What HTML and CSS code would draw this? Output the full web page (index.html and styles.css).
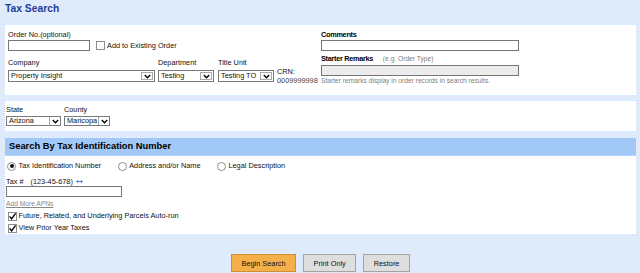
FILE: index.html
```html
<!DOCTYPE html>
<html lang="en">
<head>
    <meta charset="UTF-8">
    <title>Tax Search</title>
    <link rel="stylesheet" href="styles.css">
</head>
<body>
    <h1 class="title">Tax Search</h1>

    <div class="panel order-panel">
        <div class="col-left">
            <div class="lbl">Order No.(optional)</div>
            <div class="row">
                <input type="text" class="txt order-no">
                <span class="chk chk-add"></span>
                <span>Add to Existing Order</span>
            </div>
            <div class="row fields">
                <div class="field">
                    <div class="lbl">Company</div>
                    <div class="sel sel-company"><span class="val">Property Insight</span><span class="arr"><svg width="7" height="5" viewBox="0 0 7 5"><polyline points="0.8,1 3.5,3.8 6.2,1" fill="none" stroke="#000" stroke-width="1.4"/></svg></span></div>
                </div>
                <div class="field">
                    <div class="lbl">Department</div>
                    <div class="sel sel-dept"><span class="val">Testing</span><span class="arr"><svg width="7" height="5" viewBox="0 0 7 5"><polyline points="0.8,1 3.5,3.8 6.2,1" fill="none" stroke="#000" stroke-width="1.4"/></svg></span></div>
                </div>
                <div class="field">
                    <div class="lbl">Title Unit</div>
                    <div class="sel sel-unit"><span class="val">Testing TO</span><span class="arr"><svg width="7" height="5" viewBox="0 0 7 5"><polyline points="0.8,1 3.5,3.8 6.2,1" fill="none" stroke="#000" stroke-width="1.4"/></svg></span></div>
                </div>
                <div class="crn">CRN:<br><span class="crn-num">0009999998</span></div>
            </div>
        </div>
        <div class="col-right">
            <div class="lbl strong">Comments</div>
            <input type="text" class="txt comments">
            <div class="lbl strong remarks-lbl">Starter Remarks <span class="hint eg">(e.g. Order Type)</span></div>
            <input type="text" class="txt remarks" disabled>
            <div class="hint note">Starter remarks display in order records in search results.</div>
        </div>
    </div>

    <div class="panel place-panel">
        <div class="field">
            <div class="lbl">State</div>
            <div class="sel small sel-state"><span class="val">Arizona</span><span class="arr"><svg width="7" height="5" viewBox="0 0 7 5"><polyline points="0.8,1 3.5,3.8 6.2,1" fill="none" stroke="#000" stroke-width="1.4"/></svg></span></div>
        </div>
        <div class="field">
            <div class="lbl">County</div>
            <div class="sel small sel-county"><span class="val">Maricopa</span><span class="arr"><svg width="7" height="5" viewBox="0 0 7 5"><polyline points="0.8,1 3.5,3.8 6.2,1" fill="none" stroke="#000" stroke-width="1.4"/></svg></span></div>
        </div>
    </div>

    <div class="panel search-panel">
        <div class="bar">Search By Tax Identification Number</div>
        <div class="search-body">
            <div class="radios">
                <span class="opt"><span class="radio on"></span>Tax Identification Number</span>
                <span class="opt"><span class="radio"></span>Address and/or Name</span>
                <span class="opt"><span class="radio"></span>Legal Description</span>
            </div>
            <div class="lbl tax-lbl">Tax #<span class="fmt">(123-45-678)</span><svg class="swap" width="7" height="5" viewBox="0 0 7 5"><path d="M0.6 2.5H6.4M2.1 1L0.6 2.5L2.1 4M4.9 1L6.4 2.5L4.9 4" fill="none" stroke="#3b7ddd" stroke-width="0.9"/></svg></div>
            <input type="text" class="txt tax-no">
            <div class="more"><a href="#">Add More APNs</a></div>
            <div class="chk-row"><span class="chk on"><svg width="9" height="9" viewBox="0 0 9 9"><path d="M1.6 4.4L3.6 6.8L7.6 1.4" fill="none" stroke="#000" stroke-width="1.4"/></svg></span>Future, Related, and Underlying Parcels Auto-run</div>
            <div class="chk-row second"><span class="chk on"><svg width="9" height="9" viewBox="0 0 9 9"><path d="M1.6 4.4L3.6 6.8L7.6 1.4" fill="none" stroke="#000" stroke-width="1.4"/></svg></span>View Prior Year Taxes</div>
        </div>
    </div>

    <div class="actions">
        <button class="btn primary">Begin Search</button>
        <button class="btn">Print Only</button>
        <button class="btn">Restore</button>
    </div>
</body>
</html>
```

FILE: styles.css
```css
body {
    margin: 0;
    padding: 0 3px 0 4px;
    background: #dfeafb;
    font-family: "Liberation Sans", Arial, sans-serif;
    font-size: 7.33px;
    color: #111;
}
.title {
    margin: 0;
    padding: 2px 0 8px 1px;
    font-size: 10.3px;
    line-height: 14px;
    color: #1e3c96;
}
.panel {
    background: #fff;
    border: 1px dotted #c6d8f3;
}
.lbl {
    line-height: 9px;
    white-space: nowrap;
}
.strong {
    font-weight: bold;
    letter-spacing: -0.3px;
    color: #000;
}
.hint {
    font-size: 6.67px;
    color: #808080;
    font-weight: normal;
    letter-spacing: 0;
}
.row {
    display: flex;
    align-items: center;
}
.txt {
    box-sizing: border-box;
    height: 11px;
    margin: 0;
    padding: 0 2px;
    border: 1px solid #767676;
    background: #fff;
    font: inherit;
}

/* order panel */
.order-panel {
    display: grid;
    grid-template-columns: 313px 198px;
    align-items: start;
    padding: 5px 3px 10px;
}
.order-no {
    width: 82px;
    margin-top: 1px;
}
.chk {
    box-sizing: border-box;
    display: inline-flex;
    width: 9px;
    height: 9px;
    border: 1px solid #8d8d8d;
    background: #fff;
}
.chk svg {
    margin: -1px;
}
.chk-add {
    margin: 1px 2px 0 6px;
}
.fields {
    align-items: flex-start;
    margin-top: 7px;
}
.field .sel {
    margin-top: 3px;
}
.sel {
    box-sizing: border-box;
    display: flex;
    height: 12px;
    border: 1px solid #7a7a7a;
    background: #fff;
}
.sel .val {
    flex: 1;
    padding-left: 2px;
    line-height: 10px;
    white-space: nowrap;
    overflow: hidden;
}
.sel .arr {
    box-sizing: border-box;
    width: 12px;
    margin: 1px;
    border: 1px solid #a9a9a9;
    display: flex;
    align-items: center;
    justify-content: center;
}
.sel-company { width: 147px; margin-right: 3px; }
.sel-dept { width: 56px; margin-right: 4px; }
.sel-unit { width: 56px; margin-right: 3px; }
.crn {
    padding-top: 9px;
    line-height: 9px;
}
.crn-num {
    color: #444;
}
.comments {
    width: 198px;
    margin-top: 1px;
}
.remarks-lbl {
    margin-top: 3px;
}
.eg {
    margin-left: 8px;
}
.remarks {
    width: 198px;
    margin-top: 2px;
    background: #ececec;
}
.note {
    margin-top: 1px;
    line-height: 8px;
}

/* state / county */
.place-panel {
    display: flex;
    margin-top: 4px;
    padding: 4px 1px 5px;
}
.sel.small {
    height: 10px;
    margin-top: 2px;
}
.sel.small .val {
    line-height: 8px;
}
.sel.small .arr {
    width: 11px;
    margin: 0;
    border-width: 0 0 0 1px;
}
.sel-state { width: 55px; margin-right: 3px; }
.sel-county { width: 46px; }

/* search by tax id */
.search-panel {
    margin-top: 5px;
    padding-bottom: 1px;
}
.bar {
    height: 17px;
    line-height: 17px;
    padding-left: 4px;
    background: #a2c8f7;
    border-bottom: 1px solid #b7d5fa;
    font-size: 9.33px;
    font-weight: bold;
    color: #000;
}
.search-body {
    padding: 0 1px;
}
.radios {
    display: flex;
    margin-top: 5px;
    line-height: 10px;
}
.opt {
    display: flex;
    align-items: center;
    margin-right: 15.5px;
}
.radio {
    box-sizing: border-box;
    width: 9px;
    height: 9px;
    margin: 0 2.5px 0 1px;
    border: 1px solid #8d8d8d;
    border-radius: 50%;
    display: flex;
    align-items: center;
    justify-content: center;
}
.radio.on::after {
    content: "";
    width: 4px;
    height: 4px;
    border-radius: 50%;
    background: #111;
}
.tax-lbl {
    margin-top: 6px;
}
.fmt {
    margin-left: 7px;
}
.swap {
    margin-left: 3px;
}
.tax-no {
    width: 116px;
}
.more {
    margin-top: 3px;
    line-height: 8px;
    font-size: 6.67px;
}
.more a {
    color: #888;
}
.chk-row {
    display: flex;
    align-items: center;
    margin-top: 3px;
    line-height: 10px;
}
.chk-row.second {
    margin-top: 2px;
}
.chk-row .chk {
    margin: 0 2px 0 1.5px;
}

/* buttons */
.actions {
    display: flex;
    justify-content: center;
    gap: 7px;
    margin-top: 19px;
}
.btn {
    height: 18px;
    padding: 0 9.5px;
    border: 1px solid #a3a3a3;
    background: #dedede;
    font-family: inherit;
    font-size: 7.33px;
    color: #111;
}
.btn.primary {
    background: #f6b04a;
    border-color: #cf8f33;
}
```
